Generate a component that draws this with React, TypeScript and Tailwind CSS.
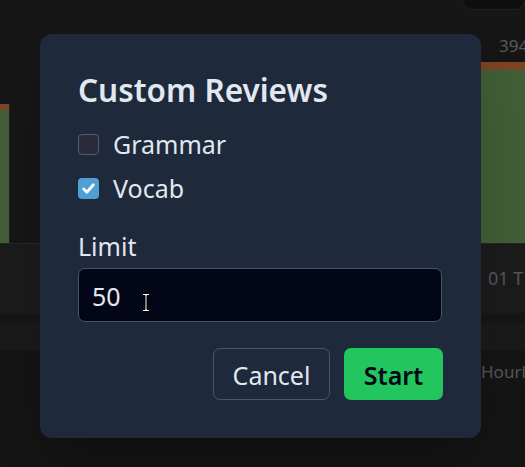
import React from "react";

function Chart() {
  return (
    <svg width="525" height="243" className="block" viewBox="0 0 525 243">
      <rect x="0" y="0" width="525" height="243" fill="#161616" />
      <rect x="0" y="104" width="9" height="6" fill="#7a4425" />
      <rect x="0" y="110" width="9" height="133" fill="#415e37" />
      <rect x="9" y="104" width="1" height="139" fill="#222" />
      <rect x="481" y="62" width="44" height="8" fill="#7a4425" />
      <rect x="481" y="70" width="44" height="173" fill="#415e37" />
      <text x="499" y="52" fill="#5a5a5a" fontSize="17" fontFamily="Noto Sans, sans-serif">394</text>
    </svg>
  );
}

export default function App() {
  return (
    <div className="relative w-[525px] h-[467px] overflow-hidden bg-[#141414]" style={{ fontFamily: '"Noto Sans", "Open Sans", sans-serif' }}>
      <div className="flex flex-col">
        <Chart />
        <div className="h-[70px] bg-[#1b1b1b] border-t border-[#262626] flex items-center justify-end">
          <span className="w-[37px] text-[18px] text-[#555] whitespace-nowrap overflow-hidden">01 T</span>
        </div>
        <div className="h-[10px] bg-[#161616]" />
        <div className="h-[27px] bg-[#1a1a1a]" />
        <div className="flex justify-end">
          <div className="w-[44px] h-[43px] bg-[#151515] flex items-center overflow-hidden">
            <span className="text-[17px] text-[#555] whitespace-nowrap">Hourly</span>
          </div>
        </div>
      </div>
      <div className="absolute right-0 top-[-12px] w-[63px] h-[22px] rounded-[10px] bg-[#0e0e0e] border border-[#222]" />

      <div className="absolute left-[40px] top-[34px] w-[441px] h-[404px] rounded-[12px] bg-[#1e293b] px-[38px] pt-[36px] pb-[38px] flex flex-col shadow-2xl">
        <h2 className="text-[31.5px] leading-[40px] font-semibold text-[#e2e8f0]">Custom Reviews</h2>
        <div className="mt-[18px] flex flex-col gap-[12px]">
          <label className="flex items-center gap-[14px] h-[32px]">
            <span className="w-[21px] h-[21px] rounded-[4px] bg-[#2a2a3a] border border-[#5b5b66]" />
            <span className="text-[25px] pt-[2px] text-[#e2e8f0]">Grammar</span>
          </label>
          <label className="flex items-center gap-[14px] h-[32px]">
            <span className="w-[21px] h-[21px] rounded-[4px] bg-[#4f9fd5] flex items-center justify-center">
              <svg width="15" height="15" viewBox="0 0 14 14">
                <path d="M2.5 7.5 L5.5 10.5 L11.5 3.5" fill="none" stroke="white" strokeWidth="2.6" strokeLinecap="round" strokeLinejoin="round" />
              </svg>
            </span>
            <span className="text-[25px] pt-[2px] text-[#e2e8f0]">Vocab</span>
          </label>
        </div>
        <div className="mt-[26px] text-[25px] leading-[32px] text-[#e2e8f0]">Limit</div>
        <div className="relative mt-[6px] h-[54px] w-[364px] rounded-[7px] bg-[#020617] border border-[#475569] flex items-center px-[13px]">
          <span className="text-[25px] pt-[3px] text-[#e2e8f0]">50</span>
          <svg className="absolute left-[63px] top-[24px]" width="8" height="19" viewBox="0 0 8 19">
            <path d="M0.5 0.5 H7.5 V2.5 H5 V16.5 H7.5 V18.5 H0.5 V16.5 H3 V2.5 H0.5 Z" fill="white" stroke="black" strokeWidth="1" />
          </svg>
        </div>
        <div className="mt-[26px] flex justify-end gap-[14px]">
          <button className="h-[52px] w-[117px] pt-[3px] rounded-[7px] border border-[#4b5563] text-[25px] text-[#e2e8f0]">Cancel</button>
          <button className="h-[52px] w-[99px] pt-[3px] rounded-[7px] bg-[#22c55e] text-[25px] font-semibold text-[#020617]">Start</button>
        </div>
      </div>
    </div>
  );
}
